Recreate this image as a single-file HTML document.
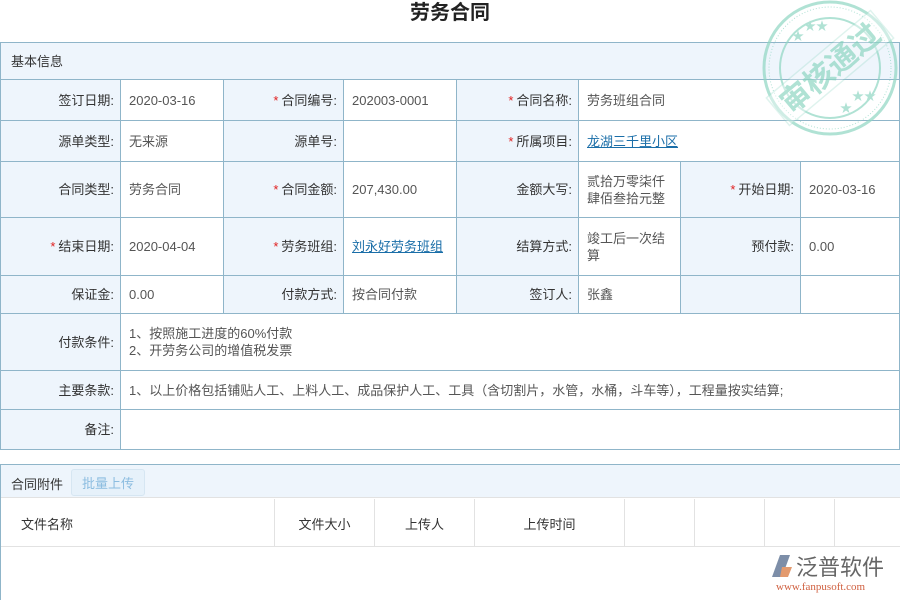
<!DOCTYPE html>
<html><head><meta charset="utf-8"><style>
*{margin:0;padding:0;box-sizing:border-box}
body{width:900px;height:600px;background:#fff;position:relative;overflow:hidden;font-family:"Liberation Sans","Noto Sans CJK SC",sans-serif;font-size:13px;color:#333}
.c{position:absolute;border-right:1px solid #8fb5c9;border-bottom:1px solid #8fb5c9;display:flex;align-items:center;padding:0 8px;line-height:17px}
.f{border-left:1px solid #8fb5c9}
.l{background:#eef5fc;justify-content:flex-end;padding-right:6px}
.v{background:#fff;color:#555}
.r{color:#e02020;margin-right:3px}
a{color:#1a6ea8;text-decoration:underline}
.h{position:absolute;top:499px;height:48px;border-right:1px solid #e2e2e2;display:flex;align-items:center;justify-content:center;color:#333}
</style></head><body>
<div style="position:absolute;top:0;left:0;width:900px;text-align:center;font-size:20px;font-weight:bold;line-height:26px;color:#222">劳务合同</div>
<div class="c l f" style="left:0;top:42px;width:900px;height:38px;justify-content:flex-start;padding-left:10px;border-top:1px solid #8fb5c9">基本信息</div>

<div class="c l f" style="left:0;top:80px;width:121px;height:41px">签订日期:</div>
<div class="c v" style="left:121px;top:80px;width:103px;height:41px">2020-03-16</div>
<div class="c l" style="left:224px;top:80px;width:120px;height:41px"><span class="r">*</span>合同编号:</div>
<div class="c v" style="left:344px;top:80px;width:113px;height:41px">202003-0001</div>
<div class="c l" style="left:457px;top:80px;width:122px;height:41px"><span class="r">*</span>合同名称:</div>
<div class="c v" style="left:579px;top:80px;width:321px;height:41px">劳务班组合同</div>

<div class="c l f" style="left:0;top:121px;width:121px;height:41px">源单类型:</div>
<div class="c v" style="left:121px;top:121px;width:103px;height:41px">无来源</div>
<div class="c l" style="left:224px;top:121px;width:120px;height:41px">源单号:</div>
<div class="c v" style="left:344px;top:121px;width:113px;height:41px"></div>
<div class="c l" style="left:457px;top:121px;width:122px;height:41px"><span class="r">*</span>所属项目:</div>
<div class="c v" style="left:579px;top:121px;width:321px;height:41px"><a>龙湖三千里小区</a></div>

<div class="c l f" style="left:0;top:162px;width:121px;height:56px">合同类型:</div>
<div class="c v" style="left:121px;top:162px;width:103px;height:56px">劳务合同</div>
<div class="c l" style="left:224px;top:162px;width:120px;height:56px"><span class="r">*</span>合同金额:</div>
<div class="c v" style="left:344px;top:162px;width:113px;height:56px">207,430.00</div>
<div class="c l" style="left:457px;top:162px;width:122px;height:56px">金额大写:</div>
<div class="c v" style="left:579px;top:162px;width:102px;height:56px">贰拾万零柒仟肆佰叁拾元整</div>
<div class="c l" style="left:681px;top:162px;width:120px;height:56px"><span class="r">*</span>开始日期:</div>
<div class="c v" style="left:801px;top:162px;width:99px;height:56px">2020-03-16</div>

<div class="c l f" style="left:0;top:218px;width:121px;height:58px"><span class="r">*</span>结束日期:</div>
<div class="c v" style="left:121px;top:218px;width:103px;height:58px">2020-04-04</div>
<div class="c l" style="left:224px;top:218px;width:120px;height:58px"><span class="r">*</span>劳务班组:</div>
<div class="c v" style="left:344px;top:218px;width:113px;height:58px"><a>刘永好劳务班组</a></div>
<div class="c l" style="left:457px;top:218px;width:122px;height:58px">结算方式:</div>
<div class="c v" style="left:579px;top:218px;width:102px;height:58px">竣工后一次结算</div>
<div class="c l" style="left:681px;top:218px;width:120px;height:58px">预付款:</div>
<div class="c v" style="left:801px;top:218px;width:99px;height:58px">0.00</div>

<div class="c l f" style="left:0;top:276px;width:121px;height:38px">保证金:</div>
<div class="c v" style="left:121px;top:276px;width:103px;height:38px">0.00</div>
<div class="c l" style="left:224px;top:276px;width:120px;height:38px">付款方式:</div>
<div class="c v" style="left:344px;top:276px;width:113px;height:38px">按合同付款</div>
<div class="c l" style="left:457px;top:276px;width:122px;height:38px">签订人:</div>
<div class="c v" style="left:579px;top:276px;width:102px;height:38px">张鑫</div>
<div class="c l" style="left:681px;top:276px;width:120px;height:38px"></div>
<div class="c v" style="left:801px;top:276px;width:99px;height:38px"></div>

<div class="c l f" style="left:0;top:314px;width:121px;height:57px">付款条件:</div>
<div class="c v" style="left:121px;top:314px;width:779px;height:57px">1、按照施工进度的60%付款<br>2、开劳务公司的增值税发票</div>
<div class="c l f" style="left:0;top:371px;width:121px;height:39px">主要条款:</div>
<div class="c v" style="left:121px;top:371px;width:779px;height:39px">1、以上价格包括铺贴人工、上料人工、成品保护人工、工具（含切割片，水管，水桶，斗车等），工程量按实结算;</div>
<div class="c l f" style="left:0;top:410px;width:121px;height:40px">备注:</div>
<div class="c v" style="left:121px;top:410px;width:779px;height:40px"></div>

<div style="position:absolute;left:0;top:464px;width:900px;height:136px;border:1px solid #8fb5c9;border-right:none;border-bottom:none"></div>
<div style="position:absolute;left:1px;top:465px;width:899px;height:33px;background:#eef5fc;border-bottom:1px solid #e2e2e2"></div>
<div style="position:absolute;left:11px;top:474px">合同附件</div>
<div style="position:absolute;left:71px;top:469px;width:74px;height:27px;border:1px solid #d6e6f2;border-radius:3px;background:#e6f1fa;color:#8cbde0;display:flex;align-items:center;justify-content:center">批量上传</div>
<div class="h" style="left:1px;width:274px;justify-content:flex-start;padding-left:20px">文件名称</div>
<div class="h" style="left:275px;width:100px">文件大小</div>
<div class="h" style="left:375px;width:100px">上传人</div>
<div class="h" style="left:475px;width:150px">上传时间</div>
<div class="h" style="left:625px;width:70px"></div>
<div class="h" style="left:695px;width:70px"></div>
<div class="h" style="left:765px;width:70px"></div>
<div style="position:absolute;left:1px;top:546px;width:899px;border-top:1px solid #e2e2e2"></div>

<svg style="position:absolute;left:760px;top:0;opacity:0.7" width="140" height="140" viewBox="0 0 140 140">
<g stroke="#8fd6c3" fill="none">
<circle cx="70" cy="68" r="66" stroke-width="3"/>
<circle cx="70" cy="68" r="61" stroke-width="1" stroke-dasharray="1 2"/>
<circle cx="70" cy="68" r="50" stroke-width="2"/>
</g>
<g transform="rotate(-40 70 68)">
<rect x="2" y="50" width="136" height="36" fill="#fff" opacity="0.4" stroke="#8fd6c3" stroke-width="1.5"/>
<text x="70" y="79" text-anchor="middle" font-size="30" font-weight="bold" fill="#8fd6c3" font-family="Noto Sans CJK SC,sans-serif">审核通过</text>
</g>
<g fill="#8fd6c3" font-size="12"><text x="32" y="40">★</text><text x="44" y="30">★★</text><text x="80" y="112">★</text><text x="92" y="100">★★</text></g>
</svg>

<div style="position:absolute;left:770px;top:553px;width:24px;height:26px">
<svg width="24" height="26"><polygon points="2,24 10,2 20,2 12,24" fill="#7d8ea8"/><polygon points="12,14 22,14 18,24 10,24" fill="#e39a6e"/></svg></div>
<div style="position:absolute;left:796px;top:552px;font-size:22px;color:#666;font-family:'Noto Sans CJK SC',sans-serif;line-height:28px">泛普软件</div>
<div style="position:absolute;left:776px;top:581px;font-size:11px;color:#d06040;font-family:'Liberation Serif',serif">www.fanpusoft.com</div>
</body></html>
